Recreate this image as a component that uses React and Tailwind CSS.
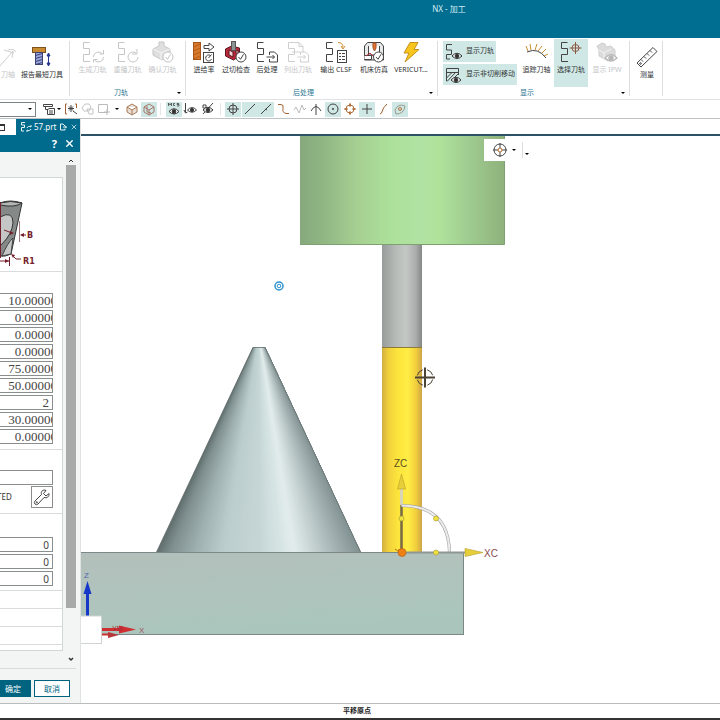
import React from 'react';
import clsx from 'clsx';
import { X } from 'lucide-react';

const TOOL_PARAMS = [
  { id: 'diameter', label: '直径', value: '10.00000' },
  { id: 'cornerRadius', label: '下半径', value: '0.00000' },
  { id: 'taper', label: '锥角', value: '0.00000' },
  { id: 'tipAngle', label: '尖角', value: '0.00000' },
  { id: 'length', label: '长度', value: '75.00000' },
  { id: 'fluteLength', label: '刀刃长度', value: '50.00000' },
  { id: 'flutes', label: '刀刃', value: '2', whole: true },
  { id: 'shankLength', label: '刀柄长度', value: '30.00000' },
  { id: 'offset', label: '偏置', value: '0.00000' },
];

const NUMBERS = [
  { id: 'toolNumber', label: '刀具号', value: '0' },
  { id: 'adjust', label: '补偿寄存器', value: '0' },
  { id: 'cutcom', label: '刀具补偿寄存器', value: '0' },
];

const CONE_STOPS = [
  [0, [98, 112, 112]],
  [0.06, [126, 142, 142]],
  [0.18, [158, 175, 175]],
  [0.32, [188, 205, 205]],
  [0.5, [198, 214, 214]],
  [0.58, [211, 225, 225]],
  [0.67, [226, 236, 236]],
  [0.76, [200, 212, 212]],
  [0.88, [163, 177, 178]],
  [1, [128, 143, 144]],
];

function coneColor(t) {
  const i = Math.max(1, CONE_STOPS.findIndex(([p]) => p >= t));
  const [p0, a] = CONE_STOPS[i - 1];
  const [p1, b] = CONE_STOPS[i];
  const k = (t - p0) / (p1 - p0);
  return `rgb(${a.map((c, n) => Math.round(c + (b[n] - c) * k)).join(',')})`;
}

function Svg({ w = 24, h = 22, children, className }) {
  return (
    <svg width={w} height={h} viewBox={`0 0 ${w} ${h}`} fill="none" stroke="#444" strokeWidth="1" className={clsx('shrink-0', className)} aria-hidden="true">
      {children}
    </svg>
  );
}

const TRACK = 'M8.500 1.5H2.5V7.5H8.5V13.5H2.5V20.5H9';

function Eye({ x, y, s = 1, color = '#333' }) {
  return (
    <g transform={`translate(${x} ${y}) scale(${s})`} stroke={color}>
      <path d="M-5 0Q0 -5.5 5 0Q0 5 -5 0Z" fill="#f4f8f7" />
      <circle r="1.8" fill={color} />
    </g>
  );
}

function CheckBadge({ x, y, color = '#444' }) {
  return (
    <g stroke={color}>
      <circle cx={x} cy={y} r="5" fill="#fff" />
      <path d={`M${x - 2.5} ${y}l2 2.3 3-5`} />
    </g>
  );
}

function Sheet({ x, y, color }) {
  return <path d={`M${x} ${y + 3}V${y}H${x + 5}L${x + 8} ${y + 3}V${y + 10}H${x}V${y + 7}M${x - 3} ${y + 5}H${x + 5}M${x + 3} ${y + 3}l2 2-2 2`} stroke={color} />;
}

function HolderIcon() {
  return (
    <Svg>
      <rect x="2.5" y="1.5" width="13" height="5" fill="#c98a32" stroke="#80521c" />
      <rect x="5.5" y="6.5" width="7" height="12" fill="#9ba6e0" stroke="#3d4270" />
      <path d="M5.5 9.5l7-2M5.5 12.5l7-2M5.5 15.5l7-2M5.5 18.5l7-2" stroke="#3d4270" />
      <path d="M18.5 8V19M17 10l1.500-3 1.500 3zM17 17l1.500 3 1.500-3z" stroke="#26358c" fill="#26358c" />
    </Svg>
  );
}

function GenerateIcon() {
  return (
    <Svg className="opacity-30">
      <path d={TRACK} />
      <path d="M12.500 16a5 5 0 0 1 9-3M22.500 9v4h-4M22.500 16a5 5 0 0 1-9 3M12.500 21.500v-3h4" />
    </Svg>
  );
}

function ReplayIcon() {
  return (
    <Svg className="opacity-30">
      <path d={TRACK} />
      <path d="M20 12a5 5 0 1 0 2 4M21 8v5h-5" />
    </Svg>
  );
}

function VerifyIcon() {
  return (
    <Svg className="opacity-30">
      <path d="M2 8l6-3V1h5v4l6 3v6l-8 5-9-5z" fill="#999" />
      <path d="M2 8l8 4 9-4M10 12v7" stroke="#ddd" />
      <CheckBadge x={17} y={16} />
    </Svg>
  );
}

function FeedIcon() {
  return (
    <Svg>
      <rect x="1.5" y="1.5" width="7" height="17" fill="#d9792b" stroke="#a65417" />
      <path d="M1.5 6l7-3M1.5 10l7-3M1.5 14l7-3M1.5 18l7-3" stroke="#b0601d" />
      <path d="M12 4.500h5V2l5 4-5 4V7.500h-5z" fill="#fff" />
      <rect x="11.500" y="11.500" width="10" height="10" fill="#fff" />
      <path d="M19 15a3 3 0 1 0 .5 3M16.500 17l3-3.500" />
    </Svg>
  );
}

function GougeIcon() {
  return (
    <Svg>
      <path d="M1.500 8l6-3 8 2v8l-6 4-8-4z" fill="#b7293a" stroke="#5c1720" />
      <path d="M5 9l4 2v5l-4-2zM11 11l3-2v4z" fill="#f0d5d8" stroke="#5c1720" />
      <rect x="7.500" y="0.500" width="4" height="9" fill="#8d9293" stroke="#555" />
      <CheckBadge x={17} y={16} />
    </Svg>
  );
}

function PostIcon() {
  return (
    <Svg>
      <path d={TRACK} />
      <Sheet x={14.5} y={11} />
    </Svg>
  );
}

function ListTrackIcon() {
  return (
    <Svg className="opacity-25">
      <path d={TRACK} />
      <path d="M5 1.500h8l4 4V11M13 1.500v4h4M6 11h8" />
      <Sheet x={14.5} y={11} />
    </Svg>
  );
}

function ClsfIcon() {
  return (
    <Svg>
      <path d={TRACK} />
      <path d="M14 1.500q5 0 5 5M17 5l2 3 2-3" stroke="#d58b2d" />
      <rect x="13.500" y="9.500" width="9" height="12" fill="#fff" />
      <path d="M15 12.500h2M18 12.500h3M15 15.500h2M18 15.500h3M15 18.500h2M18 18.500h3" />
    </Svg>
  );
}

function MachineIcon() {
  return (
    <Svg>
      <path d="M2.500 19V5l3-3.500h13l3 3.500v14z" fill="#e8eaea" />
      <path d="M6.500 5v9h11V5M2.500 14.500h7v4h-7" fill="#fff" />
      <path d="M11 2h3v5l-1.500 3L11 7z" fill="#e5763b" stroke="#a64c1d" />
      <path d="M4 15l4-3 3 3" stroke="#b7293a" />
      <CheckBadge x={16.5} y={16} />
    </Svg>
  );
}

function BoltIcon() {
  return (
    <Svg>
      <path d="M11 1.500h8l-4 7h5L6 21l4-9H5z" fill="#f8c51f" stroke="#c6921a" />
    </Svg>
  );
}

function ShowPathIcon() {
  return (
    <Svg w={18} h={18}>
      <path d="M7 1.500H1.500V7H6.500V11.500H1.500V16H5" />
      <Eye x={12} y={13} />
    </Svg>
  );
}

function ShowMoveIcon() {
  return (
    <Svg w={18} h={18}>
      <path d="M1.500 15V2.500h12V9M1.500 6.500h12M1.500 12l5-5M2 15.500l8-8.500M8 13l5-5" />
      <Eye x={11} y={14} />
    </Svg>
  );
}

function TrackAxisIcon() {
  return (
    <Svg>
      <path d="M2 11Q13 6 21 17" stroke="#444" />
      <path d="M3 10L1 5M6 9L5 3M10 9l2-6M13 10l4-5M17 12l4-4M19 15l4-2" stroke="#c8902f" />
    </Svg>
  );
}

function TrackAxisIconFaded() {
  return (
    <Svg className="opacity-25">
      <path d="M4 20L17 5M12 4q6-2 9 3M17 5l-1 7M8 4l10 3" />
    </Svg>
  );
}

function SelectPathIcon() {
  return (
    <Svg>
      <path d={TRACK} />
      <path d="M16.500 1v12M10.500 7h12" stroke="#8b5740" />
      <circle cx="16.500" cy="7" r="3.500" stroke="#8b5740" />
    </Svg>
  );
}

function IpwIcon() {
  return (
    <Svg className="opacity-35">
      <path d="M2 5l5-3 3 1 1 3 5-1 4 4v6l-7 5-9-5V9z" fill="#999" stroke="#777" />
      <path d="M4 9l5 3 7-4M9 12v6" stroke="#ddd" />
      <Eye x={16} y={17} s={1.2} />
    </Svg>
  );
}

function RulerIcon() {
  return (
    <Svg>
      <path d="M2 17L18 1.500l4 4L6 21z" />
      <path d="M6 13.500l2 2M9 10.500l2 2M12 7.500l2 2M15 4.500l2 2" />
      <circle cx="5.500" cy="17.500" r="0.800" />
    </Svg>
  );
}

function Caret({ className }) {
  return <span className={clsx('inline-block size-0 shrink-0 border-x-2 border-t-2 border-x-transparent border-t-black', className)} />;
}

function RibbonButton({ icon: Icon, label, width, disabled, active, tall }) {
  return (
    <button
      type="button"
      disabled={disabled}
      className={clsx('flex h-12 shrink-0 flex-col items-center gap-[2px] pt-[2px] whitespace-nowrap text-[7px] leading-[10px]', width, active && 'bg-[#cfe8e5]', disabled ? 'text-[#c3c5c6]' : 'text-[#2f3334]', tall ? 'mt-[6px]' : 'mt-px')}
    >
      <Icon />
      <span>{label}</span>
    </button>
  );
}

function RibbonGroup({ title, className, children, caret }) {
  return (
    <div className={clsx('relative my-[3px] flex shrink-0 flex-col border-r border-[#dcdedf]', className)}>
      <div className="-mt-[3px] flex flex-1 items-start">{children}</div>
      {title && <div className="-mb-[2px] pr-[18px] text-center text-[7px] leading-[10px] text-[#2b7791]">{title}</div>}
      {caret && <Caret className="absolute right-1 bottom-[2px]" />}
    </div>
  );
}

function Ribbon() {
  return (
    <div className="flex h-[62px] shrink-0 overflow-hidden border-b border-[#dfe1e2] bg-white">
      <RibbonGroup className="w-[70px]">
        <div className="flex w-[16px] justify-end overflow-hidden">
          <RibbonButton icon={TrackAxisIconFaded} label="刀轴" width="w-[16px]" disabled tall />
        </div>
        <RibbonButton icon={HolderIcon} label="报告最短刀具" width="w-[52px]" tall />
      </RibbonGroup>
      <RibbonGroup title="刀轨" className="w-[116px] pl-[5px]" caret>
        <RibbonButton icon={GenerateIcon} label="生成刀轨" width="w-[35px]" disabled />
        <RibbonButton icon={ReplayIcon} label="重播刀轨" width="w-[35px]" disabled />
        <RibbonButton icon={VerifyIcon} label="确认刀轨" width="w-[35px]" disabled />
      </RibbonGroup>
      <RibbonGroup title="后处理" className="w-[252px] pl-0.5" caret>
        <RibbonButton icon={FeedIcon} label="进给率" width="w-[32px]" />
        <RibbonButton icon={GougeIcon} label="过切检查" width="w-[32px]" />
        <RibbonButton icon={PostIcon} label="后处理" width="w-[30px]" />
        <RibbonButton icon={ListTrackIcon} label="列出刀轨" width="w-[32px]" disabled />
        <RibbonButton icon={ClsfIcon} label="输出 CLSF" width="w-[44px]" />
        <RibbonButton icon={MachineIcon} label="机床仿真" width="w-[32px]" />
        <RibbonButton icon={BoltIcon} label="VERICUT..." width="w-[42px]" />
      </RibbonGroup>
      <RibbonGroup title="显示" className="w-[192px] pl-[5px]" caret>
        <div className="mt-[3px] flex w-[76px] shrink-0 flex-col items-start gap-[2px] text-[7px] text-[#2f3334]">
          <button type="button" className="flex h-[21px] items-center gap-[3px] bg-[#cfe8e5] px-[2px] whitespace-nowrap">
            <ShowPathIcon />
            显示刀轨
          </button>
          <button type="button" className="flex h-[21px] items-center gap-[3px] bg-[#cfe8e5] px-[2px] whitespace-nowrap">
            <ShowMoveIcon />
            显示非切削移动
          </button>
        </div>
        <RibbonButton icon={TrackAxisIcon} label="追踪刀轴" width="w-[35px]" />
        <RibbonButton icon={SelectPathIcon} label="选择刀轨" width="w-[34px]" active />
        <RibbonButton icon={IpwIcon} label="显示 IPW" width="w-[38px]" disabled />
      </RibbonGroup>
      <RibbonGroup className="w-[33px]">
        <RibbonButton icon={RulerIcon} label="测量" width="w-[34px]" tall />
      </RibbonGroup>
    </div>
  );
}

const SNAP_ICONS = [
  { name: '捕捉点', on: true, art: <><circle cx="8" cy="7" r="4" /><path d="M8 1v12M2 7h12" /></> },
  { name: '端点', on: true, art: <path d="M3 12L13 2" /> },
  { name: '中点', on: true, art: <path d="M3 12L13 2M7 7l2 1" /> },
  { name: '控制点', art: <path d="M3 2.500h3q3 0 2 4t3 5h3" stroke="#a3612f" /> },
  { name: '极点', art: <path d="M2 8l2-3 3 6 3-8 2 5 2-2" stroke="#bbb" /> },
  { name: '交点', art: <path d="M8 2v11M3 9q5-9 10 0" /> },
  { name: '圆弧中心', on: true, art: <><circle cx="8" cy="7" r="5" /><circle cx="8" cy="7" r="0.700" /></> },
  { name: '象限点', art: <><circle cx="8" cy="7" r="4" stroke="#b5713b" /><path d="M8 1.500v3M8 9.500v3M2.500 7h3M10.500 7h3" stroke="#b5713b" strokeWidth="2" /></> },
  { name: '现有点', on: true, art: <path d="M8 2v10M3 7h10" /> },
  { name: '曲线上的点', art: <path d="M5 12l1.500-1Q8 5 12 2" stroke="#a3612f" /> },
  { name: '面上的点', on: true, art: <><path d="M3 8q3-7 10-4-1 8-9 8z" stroke="#9b9b8f" /><circle cx="8" cy="7" r="1.500" stroke="#b5713b" /></> },
];

function SmallButton({ name, on, children }) {
  return (
    <button type="button" aria-label={name} className={clsx('flex h-[15px] w-[16px] shrink-0 items-center justify-center', on && 'bg-[#cfe8e5]')}>
      <Svg w={16} h={14}>{children}</Svg>
    </button>
  );
}

function SelectionBar() {
  return (
    <div className="flex h-[19px] shrink-0 items-center overflow-hidden border-b border-[#bfc2c4] bg-white">
      <div className="relative mr-[5px] h-[15px] w-[36px] shrink-0">
        <select aria-label="选择范围" className="h-full w-full appearance-none border border-l-0 border-[#7d8284] bg-white" />
        <Caret className="pointer-events-none absolute top-[6px] right-1" />
      </div>
      <SmallButton name="过滤器">
        <path d="M2.500 2.500h9v2h-9zM4.500 4.500v3h3M6.500 7.500v5h7v-6h-6M8 9h4M8 11h4" />
      </SmallButton>
      <Caret />
      <div className="ml-[2px] flex w-[49px] shrink-0 justify-between">
        <SmallButton name="多选">
          <path d="M4 2H2.500v10H4M12 2h1.500v4" stroke="#a3612f" />
          <path d="M8 3v7M5 6.500h6M6 4.500l4 4M10 4.500l-4 4M10 9l4 3" />
        </SmallButton>
        <SmallButton name="常规选择">
          <path d="M2 6l3-4h4l2 3-2 4H4zM7 7h6v5H9z" stroke="#c4c4c4" />
        </SmallButton>
        <SmallButton name="矩形选择">
          <path d="M2.500 2.500h9v8h-9zM11 7v6M8 10h6" stroke="#bbb" />
        </SmallButton>
      </div>
      <Caret className="ml-[3px]" />
      <div className="ml-[5px] flex gap-px">
        <SmallButton name="体">
          <path d="M3 5l5-3 5 3v5l-5 3-5-3zM3 5l5 3 5-3M8 8v5" stroke="#a77c5a" fill="#eadfd5" />
        </SmallButton>
        <SmallButton name="线框" on>
          <path d="M3 5l5-3 5 3v5l-5 3-5-3zM3 5l5 3 5-3M8 8v5M6 4v6l4 1" stroke="#a3776a" />
        </SmallButton>
      </div>
      <span className="mx-[3px] h-3 w-px bg-[#e3e5e6]" />
      <div className="ml-[2px] flex gap-px">
        <SmallButton name="MCS 显示" on>
          <path d="M2.500 4V1l1.500 2L5.500 1v3M9 1.500H7.500v2H9M13 1.500h-2v1h2v1.500h-2" strokeWidth="0.800" />
          <Eye x={8} y={9.5} />
        </SmallButton>
        <SmallButton name="显示坐标">
          <path d="M2.500 1v9M1 8l1.500 3 2-1" />
          <Eye x={9} y={8} s={0.9} />
        </SmallButton>
        <SmallButton name="隐藏坐标">
          <path d="M3 12L13 1M3 3h3v3H3z" />
          <Eye x={8} y={8} s={1} />
        </SmallButton>
      </div>
      <span className="mx-1 h-3 w-px bg-[#e3e5e6]" />
      <div className="flex w-[183px] shrink-0 justify-between">
        {SNAP_ICONS.map(({ name, on, art }) => (
          <SmallButton key={name} name={name} on={on}>{art}</SmallButton>
        ))}
      </div>
    </div>
  );
}

function CutterDiagram() {
  return (
    <svg width="62" height="90" viewBox="0 0 62 90" className="block" role="img" aria-label="刀具图示">
      <path d="M0 25Q10 21 22 25L11 76Q5 79 0 78z" fill="#858988" stroke="#333" />
      <path d="M0 25Q10 22 22 25Q15 30 0 27z" fill="#b3b6b5" stroke="#333" />
      <path d="M0 39Q13 32 13 45Q12 56 2 66L0 68z" fill="#c4c7c6" stroke="#333" />
      <path d="M2 78Q8 64 13 60L11 76z" fill="#c4c7c6" stroke="#444" />
      <g stroke="#761f2c" fill="#761f2c">
        <path d="M0.500 24V80" />
        <path d="M19.500 43V64" stroke="#9d7d82" />
        <path d="M4 52l8 3M21 57h5M0 83h10M9.500 79v9M13 78l3 3h5" fill="none" />
        <path d="M14 55l-4-2v4zM20 57l4-2v4zM9 83l-4-2v4zM11 76l4 1-2 3z" stroke="none" />
      </g>
      <text x="27" y="60" fill="#761f2c" fontFamily="DejaVu Sans" fontWeight="bold" fontSize="8">B</text>
      <text x="23" y="86" fill="#761f2c" fontFamily="DejaVu Sans" fontWeight="bold" fontSize="8">R1</text>
    </svg>
  );
}

function ParamField({ id, label, value, whole }) {
  return (
    <div className="mr-[9px] h-[15px] overflow-hidden border border-l-0 border-[#8b8e8f] bg-white">
      <input
        id={id}
        aria-label={label}
        defaultValue={value}
        className={clsx('block h-[13px] bg-transparent text-right font-["Liberation_Serif",serif] text-[13px] leading-[13px] text-[#444] outline-none', whole ? 'w-full pr-[3px]' : 'w-[calc(100%+5px)]')}
      />
    </div>
  );
}

function NumberField({ id, label, value }) {
  return (
    <div className="mr-[9px] h-[15px]">
      <input id={id} aria-label={label} defaultValue={value} className="block h-full w-full border border-l-0 border-[#8b8e8f] bg-white pr-[3px] text-right text-[10px] leading-[13px] text-[#444] outline-none" />
    </div>
  );
}

function ToolPanel() {
  return (
    <aside className="flex w-[81px] shrink-0 flex-col border-r border-[#dfe2e3] bg-[#f3f4f4]">
      <div className="flex h-4 shrink-0 bg-white">
        <div className="flex w-4 items-center">
          <span className="ml-[-2px] h-[7px] w-[7px] border border-t-2 border-[#333]" />
        </div>
        <button type="button" className="flex flex-1 items-center gap-[2px] bg-[#006b8d] pl-1 text-[8px] text-white">
          <Svg w={12} h={12}>
            <path d="M5 1.500H1.500V4H4.500V6.500H1.500V10H4M7 7a2.500 2.500 0 0 1 4-1V4M11 8a2.500 2.500 0 0 1-4 1v2" stroke="#e7f4f7" />
          </Svg>
          <span>57.prt</span>
          <Svg w={8} h={8} className="ml-px">
            <path d="M4 1H1.500v6H6V6M4 1l2 2M4 4h3.500M6 3l1.500 1L6 5.500" stroke="#e7f4f7" />
          </Svg>
          <X size={8} className="ml-px" />
        </button>
      </div>
      <div className="flex h-[17px] shrink-0 items-center justify-end gap-[7px] bg-[#006b8d] pr-[5px] text-white">
        <button type="button" aria-label="帮助" className="text-[11px] leading-none font-bold">?</button>
        <button type="button" aria-label="关闭"><X size={11} strokeWidth={3} /></button>
      </div>
      <div className="flex min-h-0 flex-1">
        <div className="mt-[25px] mb-[14px] w-[63px] shrink-0 self-start border-t border-r border-b border-[#d3d6d7] bg-white">
          <div className="h-[94px] overflow-hidden border-b border-[#d9dcdd]">
            <CutterDiagram />
          </div>
          <div className="flex h-[178px] flex-col gap-[2px] border-b border-[#d9dcdd] pt-[21px]">
            {TOOL_PARAMS.map((p) => <ParamField key={p.id} {...p} />)}
          </div>
          <div className="h-[64px] border-b border-[#d9dcdd] pt-[20px]">
            <div className="mr-[9px] h-[15px]">
              <input aria-label="描述" className="block h-full w-full border border-l-0 border-[#8b8e8f] bg-white outline-none" />
            </div>
            <div className="mt-px mr-[9px] flex items-center justify-between">
              <span className="-ml-[3px] text-[8px] text-[#333]">TED</span>
              <button type="button" aria-label="编辑材料" className="flex size-[22px] items-center justify-center border border-[#8b8e8f]">
                <Svg w={18} h={18}>
                  <path d="M16 5.500l-3 2.500-2.500-2.500L13 2.500C10 1 7.500 3.500 8.500 6.500L2 13a2 2 0 0 0 3 3l6-6.500c3 1 5.500-1 5-4z" />
                  <circle cx="3.800" cy="14.300" r="0.600" />
                </Svg>
              </button>
            </div>
          </div>
          <div className="flex h-[77px] flex-col gap-[2px] border-b border-[#d9dcdd] pt-[23px]">
            {NUMBERS.map((n) => <NumberField key={n.id} {...n} />)}
          </div>
          <div className="h-[18px] border-b border-[#d9dcdd]" />
          <div className="h-[18px] border-b border-[#d9dcdd]" />
          <div className="h-[18px] border-b border-[#d9dcdd]" />
          <div className="h-[5px]" />
        </div>
        <div className="ml-[3px] flex w-[10px] flex-col items-center justify-between py-[6px]">
          <Svg w={6} h={5}><path d="M1 4l2-2 2 2" stroke="#333" /></Svg>
          <div className="mt-[2px] mb-[49px] w-full flex-1 bg-[#a7aaa9]" />
          <Svg w={6} h={5}><path d="M1 1l2 2 2-2" stroke="#333" strokeWidth="1.500" /></Svg>
        </div>
      </div>
      <div className="mr-1 flex h-[35px] shrink-0 items-start border-t border-[#d9dcdd] pt-[11px] text-[8px]">
        <button type="button" className="h-[17px] w-[31px] bg-[#00637f] pr-[5px] text-white">确定</button>
        <button type="button" className="ml-[3px] h-[17px] w-[36px] border border-[#00637f] bg-white text-[#00637f]">取消</button>
      </div>
    </aside>
  );
}

function Scene() {
  const slices = Array.from({ length: 80 }, (_, i) => i / 80);
  return (
    <svg viewBox="81 136 639 567" preserveAspectRatio="xMinYMin meet" className="absolute inset-0 size-full" fontFamily="Liberation Sans, sans-serif">
      <defs>
        <linearGradient id="holderFill">
          <stop offset="0" stopColor="#86a97d" />
          <stop offset="0.120" stopColor="#91b784" />
          <stop offset="0.280" stopColor="#a6cf92" />
          <stop offset="0.450" stopColor="#ace19a" />
          <stop offset="0.580" stopColor="#b0e2a3" />
          <stop offset="0.680" stopColor="#b1e29b" />
          <stop offset="0.820" stopColor="#9fcd91" />
          <stop offset="1" stopColor="#8fb17b" />
        </linearGradient>
        <linearGradient id="shankFill">
          <stop offset="0" stopColor="#979b99" />
          <stop offset="0.350" stopColor="#b7bbb8" />
          <stop offset="0.600" stopColor="#c4c8c5" />
          <stop offset="0.850" stopColor="#aaacab" />
          <stop offset="1" stopColor="#858786" />
        </linearGradient>
        <linearGradient id="fluteFill">
          <stop offset="0" stopColor="#cfae42" />
          <stop offset="0.150" stopColor="#f0cf3c" />
          <stop offset="0.400" stopColor="#fde53c" />
          <stop offset="0.650" stopColor="#ffec45" />
          <stop offset="0.850" stopColor="#f2cf3c" />
          <stop offset="1" stopColor="#cda548" />
        </linearGradient>
        <linearGradient id="blockFill" x2="0.300" y2="1">
          <stop offset="0" stopColor="#b3bfba" />
          <stop offset="0.500" stopColor="#b0c3bd" />
          <stop offset="1" stopColor="#aac6bc" />
        </linearGradient>
      </defs>

      {/* workpiece */}
      {slices.map((t) => (
        <polygon key={t} fill={coneColor(t)} points={`${253 + 12 * t},347 265,347 360.5,552 ${156.5 + 204 * t},552`} />
      ))}
      <path d="M156.500 552L253 347.500H265L360.500 552" fill="none" stroke="#66706f" strokeWidth="0.800" />
      <rect x="70" y="552.500" width="393.500" height="82" fill="url(#blockFill)" stroke="#7c8887" />

      {/* tool assembly */}
      <rect x="300" y="130" width="204.500" height="115" fill="url(#holderFill)" />
      <path d="M300 244.500H504.500V136" fill="none" stroke="#7ca172" />
      <rect x="382" y="245" width="40" height="102" fill="url(#shankFill)" />
      <rect x="382" y="347" width="40" height="205" fill="url(#fluteFill)" />
      <path d="M382 347.500h40" stroke="#8b7a3a" />

      <g fill="none" stroke="#2d93ce">
        <circle cx="279" cy="286" r="4" strokeWidth="1.500" />
        <circle cx="279" cy="286" r="1.800" />
      </g>

      <g fill="none" stroke="#4b4336">
        <circle cx="425" cy="377.500" r="8" strokeDasharray="8 4.560" strokeDashoffset="-2" />
        <path d="M415 377.500h20M425 367.500v20" strokeWidth="2" />
      </g>

      {/* WCS handle */}
      <path d="M401.500 552V505" stroke="#756a44" strokeWidth="2.500" />
      <path d="M401.500 505V488" stroke="#d9d4b4" strokeWidth="3" />
      <path d="M401.500 474l4 15h-8z" fill="#e6cf38" stroke="#b89d2b" strokeWidth="0.600" />
      <path d="M401.500 505.500Q449 506 449.500 553" fill="none" stroke="#9b9b9b" strokeWidth="3" />
      <path d="M401.500 505.500Q449 506 449.500 553" fill="none" stroke="#eceaea" strokeWidth="2" />
      <path d="M402 552.500h64" stroke="#8e9693" strokeWidth="2" />
      <path d="M465 548.500l18 4-18 4z" fill="#e6cf38" stroke="#b89d2b" strokeWidth="0.600" />
      <g fill="#f1e33f" stroke="#a39632" strokeWidth="0.600">
        <circle cx="401.500" cy="518.500" r="2.500" />
        <circle cx="436" cy="518.500" r="2.500" />
        <circle cx="436" cy="552.500" r="2.500" />
      </g>
      <path d="M395 549l4 3M399 549v4" stroke="#b06b1e" />
      <circle cx="402" cy="552.500" r="4" fill="#ee8116" stroke="#b05c10" strokeWidth="0.600" />
      <text x="394" y="467" fontSize="10" fill="#5b501f">ZC</text>
      <text x="484" y="557" fontSize="10" fill="#8a4a50">XC</text>

      {/* view triad */}
      <path d="M87.500 616V590" stroke="#1638c8" strokeWidth="3" />
      <path d="M87.500 581l4 13h-8z" fill="#1638c8" />
      <path d="M101 629.500h20" stroke="#cf2f33" strokeWidth="3" />
      <path d="M119 625.500l17 4-17 4z" fill="#cf2f33" />
      <path d="M101 634.500h10" stroke="#cf2f33" strokeWidth="2" />
      <path d="M108 632l11 3-11 3z" fill="#b8383a" />
      <rect x="80.500" y="616" width="21" height="27.500" fill="#fff" stroke="#d0d4d5" />
      <text x="84" y="578" fontSize="8" fill="#5566b0">Z</text>
      <text x="112" y="631" fontSize="7" fill="#a32a33">YM</text>
      <text x="139" y="633" fontSize="8" fill="#a05560">X</text>
    </svg>
  );
}

function Viewport() {
  return (
    <main className="flex min-w-0 flex-1 flex-col bg-white">
      <div className="h-[17px] shrink-0 border-b-2 border-[#2c5267]" />
      <div className="relative flex-1 overflow-hidden">
        <Scene />
        <div className="absolute top-[3px] left-[403px] flex h-[22px] w-[48px] items-center bg-white pl-2">
          <button type="button" aria-label="定向视图" className="flex items-center gap-1">
            <Svg w={16} h={16}>
              <circle cx="8" cy="8" r="6" />
              <path d="M8 1v14M1 8h14" />
              <circle cx="8" cy="8" r="2" fill="#fff" stroke="#b5713b" />
            </Svg>
            <Caret />
          </button>
          <span className="ml-[6px] h-4 w-px bg-[#dcdedf]" />
          <Caret className="mt-2 ml-[2px]" />
        </div>
      </div>
    </main>
  );
}

export default function App() {
  return (
    <div className="flex h-screen flex-col overflow-hidden bg-white font-['Noto_Sans','Noto_Sans_CJK_SC',sans-serif]">
      <header className="h-[38px] shrink-0 bg-[#006e91] pt-[3px] pl-[178px] text-center text-[8px] leading-[11px] text-[#d7ebf1]">
        NX - 加工
      </header>
      <Ribbon />
      <SelectionBar />
      <div className="flex min-h-0 flex-1">
        <ToolPanel />
        <Viewport />
      </div>
      <footer className="h-[17px] shrink-0 border-t border-b-2 border-t-[#b9bcbd] border-b-[#333] pr-[6px] text-center text-[7px] leading-[14px] font-bold text-[#222]">
        平移原点
      </footer>
    </div>
  );
}
